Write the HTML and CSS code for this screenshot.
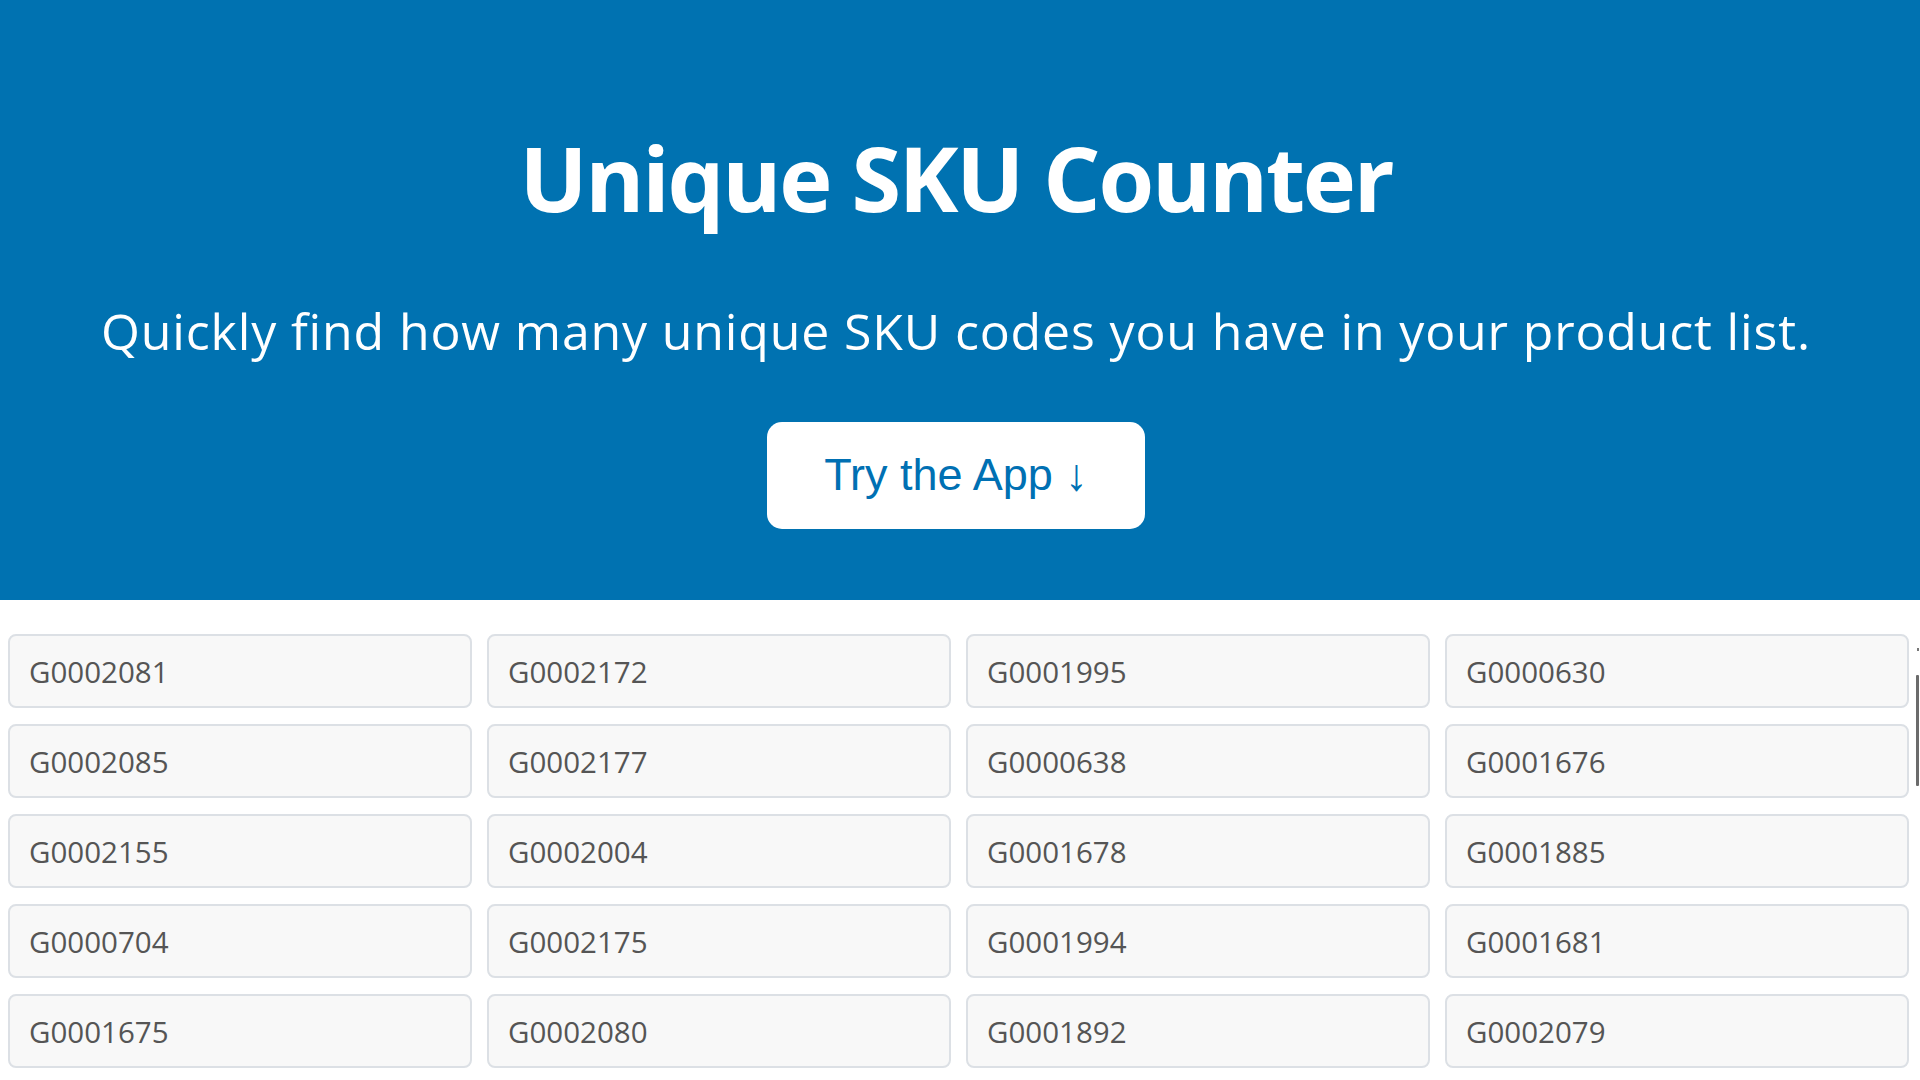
FILE: index.html
```html
<!DOCTYPE html>
<html lang="en">
<head>
<meta charset="utf-8">
<title>Unique SKU Counter</title>
<link rel="stylesheet" href="styles.css">
</head>
<body>
<header class="hero">
  <h1 class="hero-title">Unique SKU Counter</h1>
  <p class="hero-sub">Quickly find how many unique SKU codes you have in your product list.</p>
  <a class="hero-btn" href="#app">Try the App ↓</a>
</header>
<main class="sku-section" id="app">
  <div class="sku-grid">
    <div class="sku">G0002081</div>
    <div class="sku">G0002172</div>
    <div class="sku">G0001995</div>
    <div class="sku">G0000630</div>
    <div class="sku">G0002085</div>
    <div class="sku">G0002177</div>
    <div class="sku">G0000638</div>
    <div class="sku">G0001676</div>
    <div class="sku">G0002155</div>
    <div class="sku">G0002004</div>
    <div class="sku">G0001678</div>
    <div class="sku">G0001885</div>
    <div class="sku">G0000704</div>
    <div class="sku">G0002175</div>
    <div class="sku">G0001994</div>
    <div class="sku">G0001681</div>
    <div class="sku">G0001675</div>
    <div class="sku">G0002080</div>
    <div class="sku">G0001892</div>
    <div class="sku">G0002079</div>
  </div>
</main>
<div class="scroll-indicator" aria-hidden="true">
  <span class="scroll-dot"></span>
  <span class="scroll-thumb"></span>
</div>
</body>
</html>
```

FILE: styles.css
```css
* { box-sizing: border-box; }

html, body {
  margin: 0;
  padding: 0;
  overflow: hidden;
}

body {
  background: #ffffff;
  font-family: "Open Sans", "Noto Sans", sans-serif;
}

.hero {
  background: #0072b1;
  color: #ffffff;
  height: 600px;
  padding: 123px 8px 0 0;
  display: flex;
  flex-direction: column;
  align-items: center;
  text-align: center;
}

.hero-title {
  margin: 0;
  font-family: "Open Sans", "Noto Sans", sans-serif;
  font-weight: 700;
  font-size: 90px;
  line-height: 108px;
  letter-spacing: -2.2px;
}

.hero-sub {
  margin: 70px 0 0;
  font-size: 50px;
  line-height: 60px;
  font-weight: 400;
  letter-spacing: 0.85px;
}

.hero-btn {
  margin-top: 61px;
  display: inline-block;
  background: #ffffff;
  color: #0070b3;
  text-decoration: none;
  font-family: "Liberation Sans", Arial, sans-serif;
  font-size: 45px;
  line-height: 52px;
  padding: 27px 57px 28px;
  border-radius: 15px;
}

.sku-section {
  padding: 34px 11px 0 8px;
}

.sku-grid {
  display: grid;
  grid-template-columns: repeat(4, 1fr);
  gap: 16px 15px;
}

.sku {
  height: 74px;
  display: flex;
  align-items: center;
  padding-left: 19px;
  background: #f8f8f8;
  border: 2px solid #dce0e5;
  border-radius: 8px;
  font-size: 29.5px;
  color: #555555;
}

.scroll-indicator {
  position: fixed;
  right: 1px;
  top: 648px;
  width: 3px;
  display: flex;
  flex-direction: column;
  align-items: flex-end;
}

.scroll-dot {
  width: 2px;
  height: 3px;
  background: #777777;
}

.scroll-thumb {
  margin-top: 24px;
  width: 3px;
  height: 111px;
  background: #6b6b6b;
  border-radius: 1px;
}
```
